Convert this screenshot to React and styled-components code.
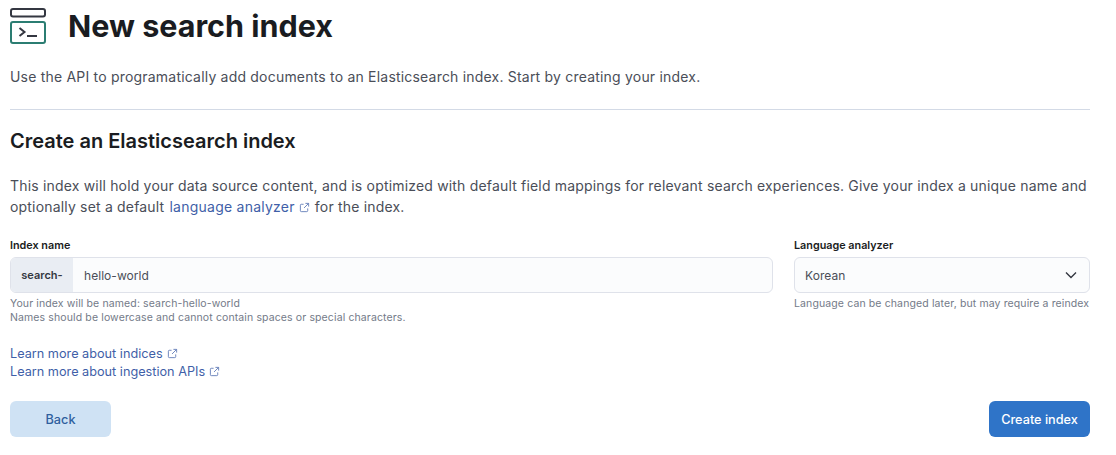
import React from 'react';
import styled, { createGlobalStyle } from 'styled-components';

const Global = createGlobalStyle`
  html, body { margin: 0; padding: 0; background: #fff; }
  body { font-family: Inter, "Liberation Sans", sans-serif; color: #343741; }
  * { box-sizing: border-box; }
`;
const Page = styled.div`
  width: 1116px; height: 455px; padding: 8px 26px 0 10px; overflow: hidden;
`;
const Header = styled.header`
  display: flex; align-items: center; gap: 22px; height: 36px;
`;
const Title = styled.h1`
  margin: 0; font-size: 30.5px; line-height: 38px; font-weight: 700; color: #1a1c21;
`;
const Lead = styled.p`
  margin: 23px 0 0; font-size: 14px; line-height: 20px; letter-spacing: .2px; color: #4a4e58;
`;
const Rule = styled.hr`
  margin: 22px 0 0; border: 0; height: 1px; background: #d3dae6;
`;
const Subtitle = styled.h2`
  margin: 19px 0 0; font-size: 20px; line-height: 24px; font-weight: 600; color: #1a1c21;
`;
const Body = styled.p`
  margin: 22px 0 0; font-size: 14px; line-height: 21px; letter-spacing: .18px; color: #4a4e58;
`;
const Link = styled.a`
  color: #3f5fa8;
  svg { margin-left: 4px; vertical-align: -1px; }
`;
const InlineLink = styled(Link)`
  letter-spacing: .24px;
  margin-left: 1px;
  svg { margin-right: 1px; }
`;
const Fields = styled.div`
  display: grid; grid-template-columns: 763px 296px; column-gap: 21px; margin-top: 21px;
`;
const Label = styled.label`
  display: block; font-size: 10.8px; line-height: 16px; font-weight: 600; color: #1a1c21; margin-bottom: 3px;
`;
const Control = styled.div`
  display: flex; align-items: center; height: 36px; background: #fbfcfd;
  border: 1px solid #dfe2ea; border-radius: 6px; overflow: hidden;
`;
const Prepend = styled.span`
  display: flex; align-items: center; justify-content: center; width: 62px; height: 100%;
  background: #e9edf3; font-size: 11px; font-weight: 600; color: #343741;
`;
const Value = styled.span`
  flex: 1; padding-left: ${p => p.$pad}px; font-size: 12px; letter-spacing: .05px; color: #4a4e58;
`;
const Help = styled.div`
  margin-top: 4px; font-size: 10.5px; line-height: 14px; letter-spacing: .12px; color: #737a88; white-space: nowrap;
`;
const Links = styled.div`
  margin-top: 20px; display: flex; flex-direction: column; align-items: flex-start;
  font-size: 12.7px; line-height: 18px;
`;
const Actions = styled.div`
  display: flex; justify-content: space-between; margin-top: 20px;
`;
const Button = styled.button`
  height: 36px; border: 0; border-radius: 6px; font: 500 12.7px Inter, sans-serif;
  width: ${p => p.$w}px;
  background: ${p => p.$primary ? '#2f74c8' : '#cfe2f4'};
  color: ${p => p.$primary ? '#fff' : '#2f5f9e'};
`;
const ChevronSlot = styled.span`
  display: flex; margin-right: 11px;
`;

const Ext = () => (
  <svg width="11" height="11" viewBox="0 0 12 12" fill="none" stroke="currentColor" strokeWidth="1" opacity=".8">
    <path d="M5 2.5H2.5a1 1 0 0 0-1 1v6a1 1 0 0 0 1 1h6a1 1 0 0 0 1-1V7M7 1.5h3.5V5M10.5 1.5 5.5 6.5" />
  </svg>
);
const LogoIcon = () => (
  <svg width="36" height="36" viewBox="0 0 36 36" fill="none" strokeWidth="2">
    <rect x="1" y="1" width="34" height="7.5" rx="2" stroke="#343741" />
    <rect x="1" y="14" width="34" height="21" rx="2" stroke="#2b7d72" />
    <path d="M9.5 20l5 4-5 4" stroke="#343741" />
    <path d="M17 28h10" stroke="#343741" />
  </svg>
);
const Chevron = () => (
  <svg width="14" height="14" viewBox="0 0 14 14" fill="none" stroke="#343741" strokeWidth="1.4">
    <path d="M2 4.5 7 9.5 12 4.5" />
  </svg>
);

export default function App() {
  return (
    <Page>
      <Global />
      <Header><LogoIcon /><Title>New search index</Title></Header>
      <Lead>Use the API to programatically add documents to an Elasticsearch index. Start by creating your index.</Lead>
      <Rule />
      <Subtitle>Create an Elasticsearch index</Subtitle>
      <Body>
        This index will hold your data source content, and is optimized with default field mappings for relevant search experiences. Give your index a unique name and optionally set a default <InlineLink>language analyzer<Ext /></InlineLink> for the index.
      </Body>
      <Fields>
        <div>
          <Label>Index name</Label>
          <Control><Prepend>search-</Prepend><Value $pad={11}>hello-world</Value></Control>
          <Help>Your index will be named: search-hello-world<br />Names should be lowercase and cannot contain spaces or special characters.</Help>
        </div>
        <div>
          <Label>Language analyzer</Label>
          <Control><Value $pad={10}>Korean</Value><ChevronSlot><Chevron /></ChevronSlot></Control>
          <Help>Language can be changed later, but may require a reindex</Help>
        </div>
      </Fields>
      <Links>
        <Link>Learn more about indices<Ext /></Link>
        <Link>Learn more about ingestion APIs<Ext /></Link>
      </Links>
      <Actions>
        <Button $w={101}>Back</Button>
        <Button $primary $w={101}>Create index</Button>
      </Actions>
    </Page>
  );
}
